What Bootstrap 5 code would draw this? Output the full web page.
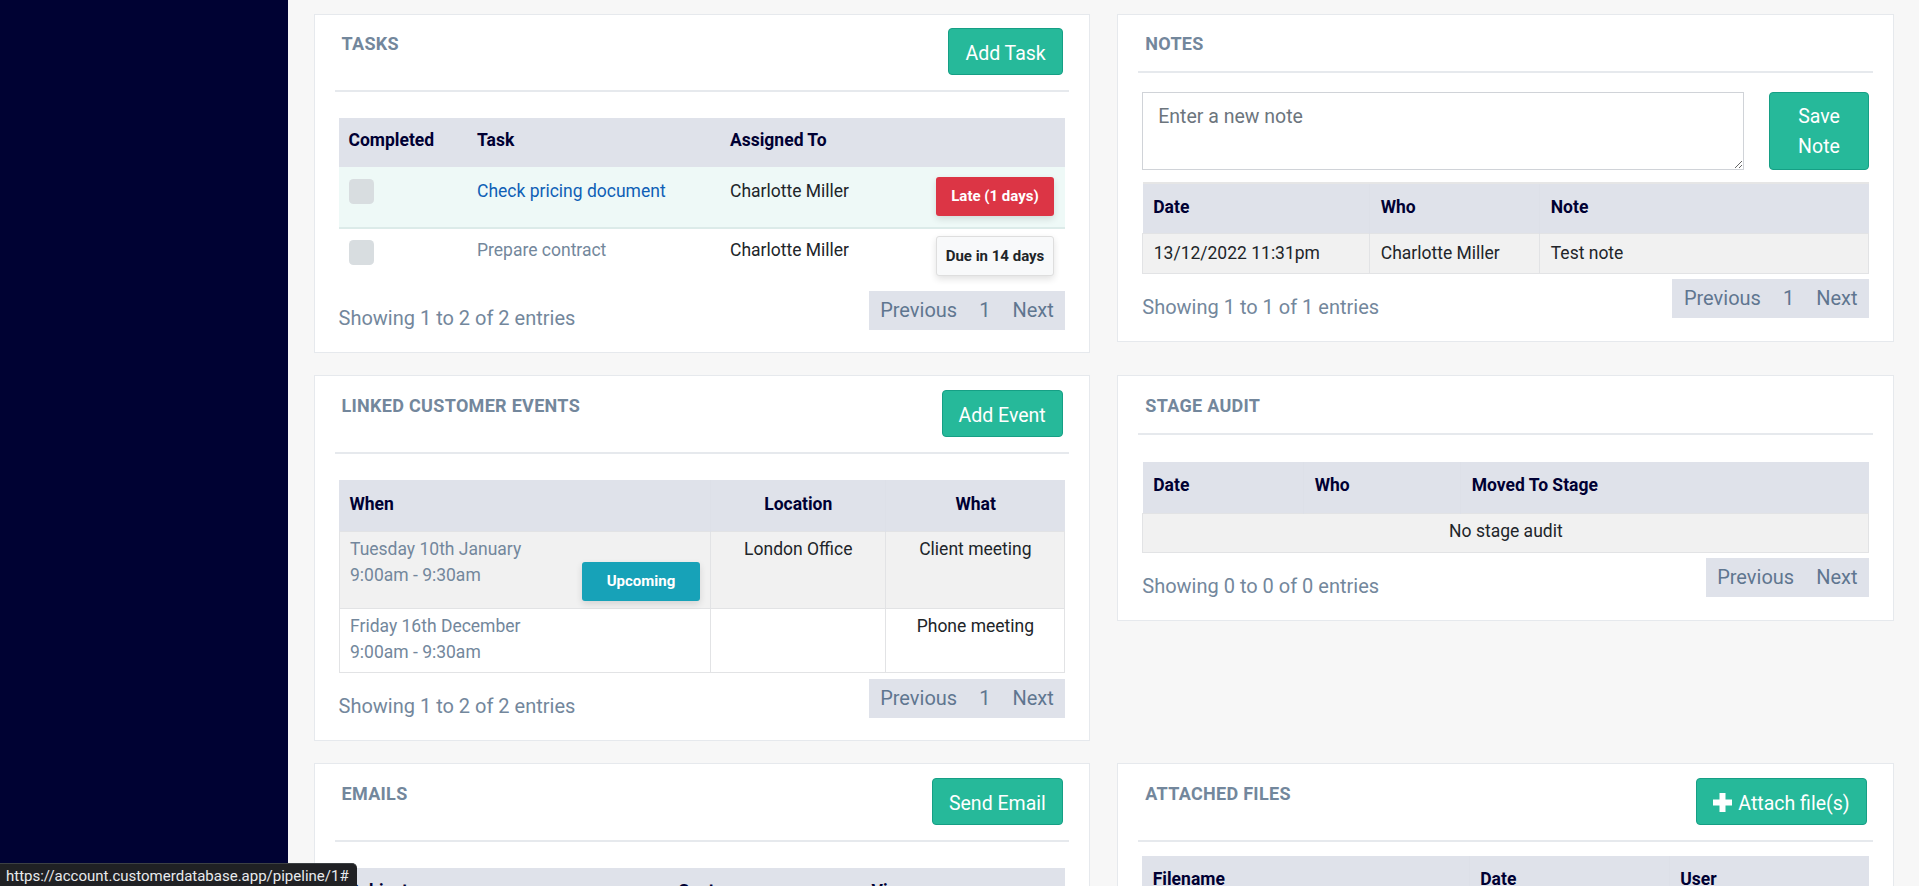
<!DOCTYPE html>
<html lang="en">
<head>
  <meta charset="UTF-8">
  <title>Pipeline</title>
  <meta name="viewport" content="width=device-width, initial-scale=1.0">
  <link rel="stylesheet" href="https://cdn.jsdelivr.net/npm/bootstrap@5.3.2/dist/css/bootstrap.min.css">
  <style>
    html, body {
      height: 100%;
      overflow: hidden;
    }
    body {
      background: #f7f7f7;
      font-family: Roboto, "Liberation Sans", sans-serif;
      font-size: 17.5px;
      color: #212529;
    }
    .sidebar {
      width: 288px;
      background: #000233;
    }
    .board {
      padding: 13.5px 25px 0 25.5px;
    }
    .board > .row {
      --bs-gutter-x: 27px;
      --bs-gutter-y: 22px;
    }
    .panel {
      border: 1.5px solid #e6e9ed;
      border-radius: 0;
      padding: 13px 20px 0;
    }
    .panel.lower {
      padding-top: 14px;
    }
    .panel-head {
      height: 62.5px;
    }
    .panel-head.short {
      height: 43.5px;
    }
    .panel-head h2 {
      margin: 0;
      padding-left: 7px;
      font-size: 18px;
      font-weight: 700;
      line-height: 32px;
      color: #73879c;
      letter-spacing: .3px;
    }
    .panel-rule {
      margin: 0;
      height: 2px;
      border: 0;
      opacity: 1;
      background: #e6e9ed;
    }
    .panel-content {
      padding: 26px 4px 22px;
    }
    .panel-content.deep {
      padding-top: 27px;
    }
    .panel-content.tight {
      padding-top: 19px;
    }
    .panel-content.flush {
      padding-top: 14px;
    }
    .panel-content.roomy {
      padding-bottom: 23px;
    }
    .btn-save {
      background: #26b99a;
      border: 1px solid #169f85;
      border-radius: 4px;
      color: #fff;
      font-size: 19.5px;
      padding: 10px 16px 6px;
      height: 47px;
      white-space: nowrap;
    }
    .btn-save:hover {
      background: #26b99a;
      color: #fff;
    }
    .btn-save svg {
      vertical-align: -2px;
      margin-right: 2px;
    }
    .me-head {
      margin-right: 6.5px;
    }
    .note-row {
      gap: 25.5px;
      margin-bottom: 12px;
    }
    .btn-note {
      flex: 0 0 100px;
      height: 78px;
      white-space: normal;
      line-height: 30px;
      padding: 8px 10px 6px;
    }
    .note-input {
      height: 78px;
      min-height: 78px;
      border: 1.5px solid #d0d3d8;
      border-radius: 0;
      padding: 9px 15px;
      font-size: 19.5px;
      line-height: 30px;
    }
    .note-input::placeholder {
      color: #6c757d;
    }
    .data-table {
      table-layout: fixed;
      margin: 0;
      font-size: 17.5px;
      --bs-table-bg: transparent;
    }
    .data-table thead {
      --bs-table-bg: #dfe2ea;
    }
    .data-table thead th {
      color: #000033;
      font-weight: 700;
      padding: 10px 10px 8px;
      line-height: 26px;
      vertical-align: top;
      border: 0;
    }
    .data-table tbody td {
      padding: 4px 10px;
      line-height: 26px;
      vertical-align: top;
      border-color: #e2e3e5;
    }
    .data-table .zebra {
      --bs-table-bg: #f1f1f1;
    }
    .cells-bordered td {
      border: 1.5px solid #e2e3e5;
    }
    .cells-bordered thead th + th {
      border-left: 1px solid #dde0e8;
    }
    .data-table.cells-bordered thead th,
    .data-table.cells-bordered tbody td {
      padding-left: 10.5px;
    }
    .muted-text {
      color: #73879c;
    }
    .task-table thead tr { height: 49px; }
    .task-table thead th { padding-top: 9px; }
    .task-table tbody td { padding-top: 11px; }
    .task-table .first-row { height: 61px; --bs-table-bg: #eef9f7; }
    .task-table .first-row td { border-bottom: 2px solid #dcebe9; }
    .task-table .last-row { height: 57px; }
    .task-table .last-row td { border: 0; padding-top: 8px; }
    .task-table .status-cell { padding: 10px 10px 0 10px; }
    .task-table .last-row .status-cell { padding-top: 7px; }
    .task-table th:nth-child(1) { width: 128.5px; }
    .task-table th:nth-child(2) { width: 253px; }
    .task-table th:nth-child(3) { width: 206px; }
    .tick {
      display: block;
      width: 25px;
      height: 25px;
      margin: 1px 0 0;
      background-color: #d8dde0;
      border: 0;
      border-radius: 5px;
    }
    .last-row .tick {
      margin-top: 2.5px;
    }
    .task-link {
      color: #0f60b6;
      text-decoration: none;
    }
    .status {
      display: block;
      width: 118px;
      height: 38.5px;
      line-height: 28px;
      font-size: 15px;
      font-weight: 700;
      border-radius: 3px;
      box-shadow: 0 3px 7px rgba(0, 0, 0, .12);
      padding: 5px 0;
      text-align: center;
    }
    .status-light {
      background: #f8f9fa;
      border: 1px solid #dedede;
      color: #212529;
      height: 40px;
    }
    .status-upcoming {
      background: #17a2b8;
      color: #fff;
      flex: 0 0 118px;
      margin-top: 26.5px;
    }
    .event-table thead tr { height: 51px; }
    .event-table thead th { padding-top: 11px; }
    .event-table th:nth-child(1) { width: 371.5px; }
    .event-table th:nth-child(2) { width: 175px; }
    .event-table .first-row { height: 77px; }
    .event-table .last-row { height: 64.5px; }
    .notes-table { border-top: 2px solid #e6e6e6; }
    .notes-table thead tr { height: 50px; }
    .notes-table tbody tr { height: 40px; }
    .notes-table tbody td { padding-top: 6px; }
    .notes-table th:nth-child(1) { width: 227px; }
    .notes-table th:nth-child(2) { width: 170px; }
    .audit-table thead tr { height: 51px; }
    .audit-table thead th { padding-top: 10px; }
    .audit-table tbody tr { height: 39px; }
    .audit-table tbody td { padding-top: 4.5px; }
    .audit-table th:nth-child(1) { width: 161px; }
    .audit-table th:nth-child(2) { width: 157px; }
    .email-table th:nth-child(1) { width: 330px; }
    .email-table th:nth-child(2) { width: 193px; }
    .file-table th:nth-child(1) { width: 327px; }
    .file-table th:nth-child(2) { width: 200px; }
    .table-foot {
      margin-top: 5.5px;
      height: 39px;
    }
    .table-info {
      padding-top: 12.5px;
      font-size: 20px;
      line-height: 30px;
      color: #73879c;
    }
    .pager {
      margin: 0;
      background: #dfe2ea;
      height: 39px;
    }
    .pager .page-link {
      background: transparent;
      border: 0;
      border-radius: 0;
      color: #5f7690;
      font-size: 20px;
      line-height: 39px;
      padding: 0 11.5px;
    }
    .status-bubble {
      position: absolute;
      left: 0;
      bottom: 0;
      height: 23px;
      padding: 0 8px 0 6px;
      background: #202124;
      color: #e8eaed;
      font-size: 15px;
      line-height: 24px;
      border-top-right-radius: 5px;
      border-top: 1px solid #3c4043;
      white-space: nowrap;
    }
  </style>
</head>
<body>
  <div class="d-flex h-100">
    <div class="sidebar flex-shrink-0"></div>
    <main class="board flex-grow-1">
      <div class="row align-items-start">

        <div class="col-6">
          <div class="card panel">
            <div class="panel-head d-flex justify-content-between align-items-start">
              <h2>TASKS</h2>
              <button class="btn btn-save me-head" type="button">Add Task</button>
            </div>
            <hr class="panel-rule">
            <div class="panel-content">
              <table class="table data-table task-table">
                <thead>
                  <tr><th>Completed</th><th>Task</th><th>Assigned To</th><th></th></tr>
                </thead>
                <tbody>
                  <tr class="first-row">
                    <td><input class="form-check-input tick" type="checkbox"></td>
                    <td><a class="task-link" href="#">Check pricing document</a></td>
                    <td>Charlotte Miller</td>
                    <td class="status-cell"><span class="status text-bg-danger">Late (1 days)</span></td>
                  </tr>
                  <tr class="last-row">
                    <td><input class="form-check-input tick" type="checkbox"></td>
                    <td class="muted-text">Prepare contract</td>
                    <td>Charlotte Miller</td>
                    <td class="status-cell"><span class="status status-light">Due in 14 days</span></td>
                  </tr>
                </tbody>
              </table>
              <div class="table-foot d-flex justify-content-between align-items-start">
                <div class="table-info">Showing 1 to 2 of 2 entries</div>
                <ul class="pagination pager">
                  <li class="page-item"><a class="page-link" href="#">Previous</a></li>
                  <li class="page-item"><a class="page-link" href="#">1</a></li>
                  <li class="page-item"><a class="page-link" href="#">Next</a></li>
                </ul>
              </div>
            </div>
          </div>
        </div>

        <div class="col-6">
          <div class="card panel">
            <div class="panel-head short">
              <h2>NOTES</h2>
            </div>
            <hr class="panel-rule">
            <div class="panel-content tight roomy">
              <div class="d-flex note-row">
                <textarea class="form-control note-input" placeholder="Enter a new note"></textarea>
                <button class="btn btn-save btn-note" type="button">Save Note</button>
              </div>
              <table class="table data-table notes-table cells-bordered">
                <thead>
                  <tr><th>Date</th><th>Who</th><th>Note</th></tr>
                </thead>
                <tbody>
                  <tr class="zebra"><td>13/12/2022 11:31pm</td><td>Charlotte Miller</td><td>Test note</td></tr>
                </tbody>
              </table>
              <div class="table-foot d-flex justify-content-between align-items-start">
                <div class="table-info">Showing 1 to 1 of 1 entries</div>
                <ul class="pagination pager">
                  <li class="page-item"><a class="page-link" href="#">Previous</a></li>
                  <li class="page-item"><a class="page-link" href="#">1</a></li>
                  <li class="page-item"><a class="page-link" href="#">Next</a></li>
                </ul>
              </div>
            </div>
          </div>
        </div>

        <div class="col-6">
          <div class="card panel lower">
            <div class="panel-head d-flex justify-content-between align-items-start">
              <h2>LINKED CUSTOMER EVENTS</h2>
              <button class="btn btn-save me-head" type="button">Add Event</button>
            </div>
            <hr class="panel-rule">
            <div class="panel-content">
              <table class="table data-table event-table cells-bordered">
                <thead>
                  <tr><th>When</th><th class="text-center">Location</th><th class="text-center">What</th></tr>
                </thead>
                <tbody>
                  <tr class="first-row zebra">
                    <td>
                      <div class="d-flex justify-content-between align-items-start muted-text">
                        <div>Tuesday 10th January<br>9:00am - 9:30am</div>
                        <span class="status status-upcoming">Upcoming</span>
                      </div>
                    </td>
                    <td class="text-center">London Office</td>
                    <td class="text-center">Client meeting</td>
                  </tr>
                  <tr class="last-row">
                    <td class="muted-text">Friday 16th December<br>9:00am - 9:30am</td>
                    <td></td>
                    <td class="text-center">Phone meeting</td>
                  </tr>
                </tbody>
              </table>
              <div class="table-foot d-flex justify-content-between align-items-start">
                <div class="table-info">Showing 1 to 2 of 2 entries</div>
                <ul class="pagination pager">
                  <li class="page-item"><a class="page-link" href="#">Previous</a></li>
                  <li class="page-item"><a class="page-link" href="#">1</a></li>
                  <li class="page-item"><a class="page-link" href="#">Next</a></li>
                </ul>
              </div>
            </div>
          </div>
        </div>

        <div class="col-6">
          <div class="card panel lower">
            <div class="panel-head short">
              <h2>STAGE AUDIT</h2>
            </div>
            <hr class="panel-rule">
            <div class="panel-content deep roomy">
              <table class="table data-table audit-table cells-bordered">
                <thead>
                  <tr><th>Date</th><th>Who</th><th>Moved To Stage</th></tr>
                </thead>
                <tbody>
                  <tr class="zebra"><td colspan="3" class="text-center">No stage audit</td></tr>
                </tbody>
              </table>
              <div class="table-foot d-flex justify-content-between align-items-start">
                <div class="table-info">Showing 0 to 0 of 0 entries</div>
                <ul class="pagination pager">
                  <li class="page-item"><a class="page-link" href="#">Previous</a></li>
                  <li class="page-item"><a class="page-link" href="#">Next</a></li>
                </ul>
              </div>
            </div>
          </div>
        </div>

        <div class="col-6">
          <div class="card panel lower">
            <div class="panel-head d-flex justify-content-between align-items-start">
              <h2>EMAILS</h2>
              <button class="btn btn-save me-head" type="button">Send Email</button>
            </div>
            <hr class="panel-rule">
            <div class="panel-content">
              <table class="table data-table email-table">
                <thead>
                  <tr><th>Subject</th><th>Sent</th><th>View</th></tr>
                </thead>
              </table>
            </div>
          </div>
        </div>

        <div class="col-6">
          <div class="card panel lower">
            <div class="panel-head d-flex justify-content-between align-items-start">
              <h2>ATTACHED FILES</h2>
              <button class="btn btn-save me-head" type="button">
                <svg width="19" height="19" viewBox="0 0 19 19" fill="#fff"><path d="M6.5 0h6v6.500H19v6h-6.500V19h-6v-6.500H0v-6h6.500z"/></svg>
                Attach file(s)
              </button>
            </div>
            <hr class="panel-rule">
            <div class="panel-content flush">
              <table class="table data-table file-table cells-bordered">
                <thead>
                  <tr><th>Filename</th><th>Date</th><th>User</th></tr>
                </thead>
              </table>
            </div>
          </div>
        </div>

      </div>
    </main>
  </div>
  <div class="status-bubble">https://account.customerdatabase.app/pipeline/1#</div>
  <script src="https://cdn.jsdelivr.net/npm/bootstrap@5.3.2/dist/js/bootstrap.bundle.min.js"></script>
</body>
</html>
